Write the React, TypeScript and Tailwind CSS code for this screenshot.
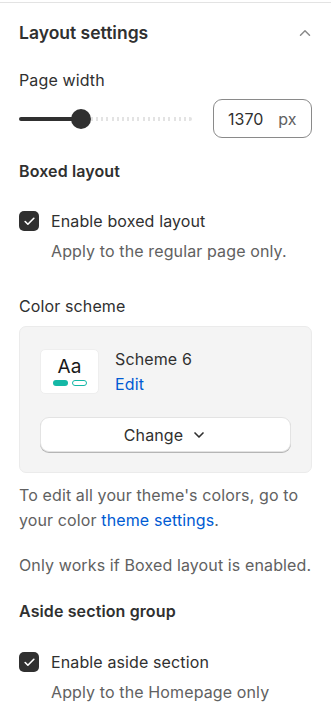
import { ChevronDown, ChevronUp, Check } from 'lucide-react'

const ticks = Array.from({ length: 19 })

function Checkbox() {
  return (
    <span className="flex h-5 w-5 shrink-0 items-center justify-center rounded-[5px] bg-[#303030]">
      <Check size={13} strokeWidth={3} color="#ffffff" />
    </span>
  )
}

function CheckRow({ label, hint }: { label: string, hint: string }) {
  return (
    <div>
      <div className="flex h-6 items-center gap-3">
        <Checkbox />
        <span className="text-[16px] leading-6 text-[#303030]">{label}</span>
      </div>
      <p className="mt-[6px] pl-8 text-[16px] leading-6 text-[#616161]">{hint}</p>
    </div>
  )
}

export default function App() {
  return (
    <div className="min-h-[728px] bg-white font-['Inter',sans-serif] tracking-[0.12px]">
      <div className="h-[2px]" />
      <div className="border-t border-[#e3e3e3] px-[19px] pt-[18px]">
        <div className="flex h-6 items-center justify-between">
          <h2 className="text-[17.5px] font-semibold leading-6 tracking-normal text-[#303030]">Layout settings</h2>
          <ChevronUp size={18} color="#8a8a8a" className="mr-[-2px]" />
        </div>

        <p className="mt-[23px] text-[16px] leading-6 text-[#303030]">Page width</p>
        <div className="mt-[7px] flex h-[39px] items-center justify-between">
          <div className="relative flex h-5 w-[173px] items-center">
            <div className="h-1 w-[62px] rounded-full bg-[#303030]" />
            <div className="ml-[10px] flex flex-1 items-center justify-between">
              {ticks.map((_, i) => (
                <span key={i} className="h-[4px] w-[2px] bg-[#e3e3e3]" />
              ))}
              <span className="h-[4px] w-[3px] rounded-r-full bg-[#e3e3e3]" />
            </div>
            <span className="absolute left-[52px] top-0 h-5 w-5 rounded-full bg-[#303030]" />
          </div>
          <div className="flex h-[39px] w-[99px] items-center rounded-[9px] border border-[#8a8a8a] pl-[14px] text-[16px] tracking-normal text-[#303030]">
            <span>1370</span>
            <span className="ml-[15px] text-[#616161]">px</span>
          </div>
        </div>

        <h3 className="mt-[21px] text-[16px] font-semibold leading-6 text-[#303030]">Boxed layout</h3>
        <div className="mt-[26px]">
          <CheckRow label="Enable boxed layout" hint="Apply to the regular page only." />
        </div>

        <p className="mt-[31px] text-[16px] leading-6 text-[#303030]">Color scheme</p>
        <div className="mt-[8px] rounded-[7px] border border-[#ebebeb] bg-[#f4f4f4] px-5 pb-5 pt-[22px]">
          <div className="flex items-start gap-4">
            <div className="flex h-[45px] w-[59px] flex-col items-center justify-center rounded-[5px] border border-[#eeeeee] bg-white">
              <span className="text-[19px] leading-5 tracking-normal text-[#1a1a1a]">Aa</span>
              <div className="mt-[3px] flex gap-[4px]">
                <span className="h-[6px] w-[15px] rounded-full bg-[#14b8a6]" />
                <span className="h-[6px] w-[15px] rounded-full border border-[#14b8a6] bg-white" />
              </div>
            </div>
            <div className="-mt-[2px]">
              <p className="text-[16px] leading-6 text-[#303030]">Scheme 6</p>
              <p className="mt-[1px] text-[16px] leading-6 text-[#005bd3]">Edit</p>
            </div>
          </div>
          <button className="mt-[21px] flex h-[35px] w-full items-center justify-center gap-2 rounded-[9px] border border-[#e3e3e3] bg-white text-[16px] text-[#303030] shadow-[0_1px_0_#b5b5b5]">
            Change
            <ChevronDown size={16} strokeWidth={2.5} color="#303030" />
          </button>
        </div>

        <p className="mt-[10px] text-[16px] leading-[25px] text-[#616161]">
          To edit all your theme's colors, go to your color <span className="text-[#005bd3]">theme settings</span>.
        </p>
        <p className="mt-[20px] text-[16px] leading-6 text-[#616161]">Only works if Boxed layout is enabled.</p>

        <h3 className="mt-[22px] text-[16px] font-semibold leading-6 text-[#303030]">Aside section group</h3>
        <div className="mt-[27px]">
          <CheckRow label="Enable aside section" hint="Apply to the Homepage only" />
        </div>
      </div>
    </div>
  )
}
